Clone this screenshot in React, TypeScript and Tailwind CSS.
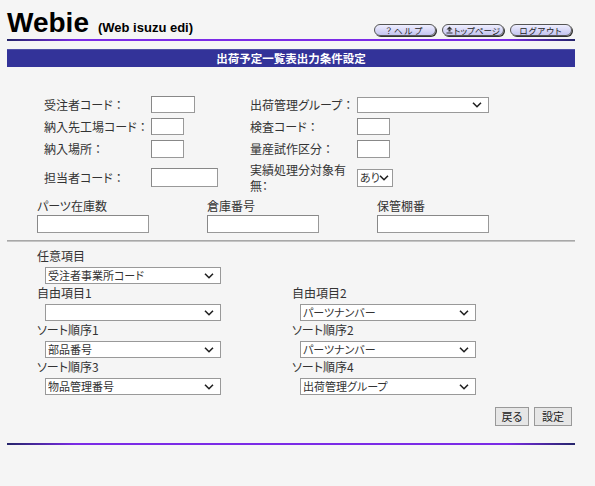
import React from "react";

const JP = "[font-family:'Noto_Sans_CJK_JP',sans-serif] [font-feature-settings:'palt']";

function TextBox({ w, h = 17 }: { w: number; h?: number }) {
  return (
    <input
      type="text"
      style={{ width: w, height: h }}
      className="block border border-[#999] border-t-[#888] border-l-[#888] bg-white outline-none"
    />
  );
}

function Chevron({ tight }: { tight?: boolean }) {
  return (
    <svg
      width="10"
      height="7"
      viewBox="0 0 10 7"
      className={`pointer-events-none absolute top-1/2 -translate-y-1/2 ${tight ? "right-[4px]" : "right-[7px]"}`}
    >
      <path d="M1 1.2 L5 5.2 L9 1.2" fill="none" stroke="#222" strokeWidth="1.6" />
    </svg>
  );
}

function Select({ w, value, h = 17 }: { w: number; value: string; h?: number }) {
  const tight = w < 60;
  return (
    <div className="relative" style={{ width: w, height: h }}>
      <select
        defaultValue={value}
        className={`block h-full w-full appearance-none border border-[#999] bg-white py-0 pl-[2px] text-[11px] leading-none text-[#333] outline-none ${JP}`}
      >
        <option value={value}>{value}</option>
      </select>
      <Chevron tight={tight} />
    </div>
  );
}

function PillButton({ children }: { children: React.ReactNode }) {
  return (
    <div className="flex h-[12px] w-[62px] items-center justify-center rounded-full border border-[#555] bg-[linear-gradient(to_bottom,#eeeeff,#c4c4f0)] text-[8.5px] leading-none text-[#222] shadow-[1px_1px_0_#333]">
      {children}
    </div>
  );
}

function Label({ children, className = "" }: { children: React.ReactNode; className?: string }) {
  return <div className={`text-[12px] leading-[15px] ${className}`}>{children}</div>;
}

function Colon() {
  return <span className="[font-feature-settings:normal]">：</span>;
}

function Field({ label, value }: { label: string; value: string }) {
  return (
    <div className="flex flex-col">
      <Label className="leading-[16px]">{label}</Label>
      <div className="mt-[3px] pl-[8px]">
        <Select w={176} value={value} />
      </div>
    </div>
  );
}

export default function App() {
  return (
    <div className={`min-h-[486px] w-[595px] bg-[#f5f5f5] text-[#333] ${JP}`}>
      <div className="ml-[7px] w-[568px]">
        {/* header */}
        <div className="flex h-[38px] items-end justify-between">
          <div className="flex items-baseline text-black [font-family:'Liberation_Sans',Arial,sans-serif]">
            <span className="text-[28px] font-bold leading-[30px]">Webie</span>
            <span className="ml-[9px] text-[13px] font-bold">(Web isuzu edi)</span>
          </div>
          <div className="mb-[2px] mr-[3px] flex gap-[6px]">
            <PillButton>
              <span className="tracking-[2px]">？ヘルプ</span>
            </PillButton>
            <PillButton>
              <svg width="7" height="8" viewBox="0 0 7 8" className="mr-[1px]">
                <path d="M3.5 0.5 L6.5 3.5 H0.5 Z" fill="#333" />
                <rect x="2.5" y="3.5" width="2" height="2" fill="#333" />
                <rect x="0.5" y="6.5" width="6" height="1" fill="#333" />
              </svg>
              トップページ
            </PillButton>
            <PillButton>
              <span className="tracking-[1px]">ログアウト</span>
            </PillButton>
          </div>
        </div>
        <div className="mt-[1px] h-[2px] bg-[linear-gradient(to_right,#25256a,#7b2be6_12%,#7b2be6_88%,#25256a)]" />
        <div className="mt-[8px] flex h-[18px] items-center justify-center border-t border-[#5050a8] bg-[#333399] text-[11.5px] font-bold text-white">
          出荷予定一覧表出力条件設定
        </div>

        {/* upper conditions */}
        <div className="mt-[28px] grid grid-cols-[107px_99px_107px_1fr] grid-rows-[19px_19px_19px_33px] items-center gap-y-[3px] pl-[37px]">
          <Label>受注者コード<Colon /></Label>
          <TextBox w={44} />
          <Label>出荷管理グループ<Colon /></Label>
          <Select w={132} value="" h={16} />

          <Label>納入先工場コード<Colon /></Label>
          <TextBox w={33} />
          <Label>検査コード<Colon /></Label>
          <TextBox w={33} />

          <Label>納入場所<Colon /></Label>
          <TextBox w={33} h={18} />
          <Label>量産試作区分<Colon /></Label>
          <TextBox w={33} h={18} />

          <Label>担当者コード<Colon /></Label>
          <TextBox w={67} h={19} />
          <Label className="w-[100px] !leading-[16px]">実績処理分対象有無：</Label>
          <Select w={36} value="あり" h={18} />
        </div>

        <div className="mt-[4px] flex pl-[30px]">
          {["パーツ在庫数", "倉庫番号", "保管棚番"].map((t) => (
            <div key={t} className="flex w-[170px] flex-col">
              <Label className="leading-[16px]">{t}</Label>
              <div className="mt-[1px]">
                <TextBox w={112} h={18} />
              </div>
            </div>
          ))}
        </div>

        <div className="mt-[7px] h-[2px] border-t border-[#a8a8a8] bg-[#c4c4c4]" />

        {/* lower selections */}
        <div className="mt-[6px] grid grid-cols-[255px_1fr] gap-y-[1px] pl-[30px]">
          <Field label="任意項目" value="受注者事業所コード" />
          <div />
          <Field label="自由項目1" value="" />
          <Field label="自由項目2" value="パーツナンバー" />
          <Field label="ソート順序1" value="部品番号" />
          <Field label="ソート順序2" value="パーツナンバー" />
          <Field label="ソート順序3" value="物品管理番号" />
          <Field label="ソート順序4" value="出荷管理グループ" />
        </div>

        <div className="mt-[12px] flex justify-end gap-[5px] pr-[3px]">
          <button className="h-[19px] w-[34px] border border-[#999] bg-[#e6e6e6] text-[11px] leading-none text-[#222]">
            戻る
          </button>
          <button className="h-[19px] w-[38px] border border-[#999] bg-[#e6e6e6] text-[11px] leading-none text-[#222]">
            設定
          </button>
        </div>

        <div className="mt-[17px] h-[2px] bg-[linear-gradient(to_right,#25256a,#7b2be6_12%,#7b2be6_88%,#25256a)]" />
      </div>
    </div>
  );
}
